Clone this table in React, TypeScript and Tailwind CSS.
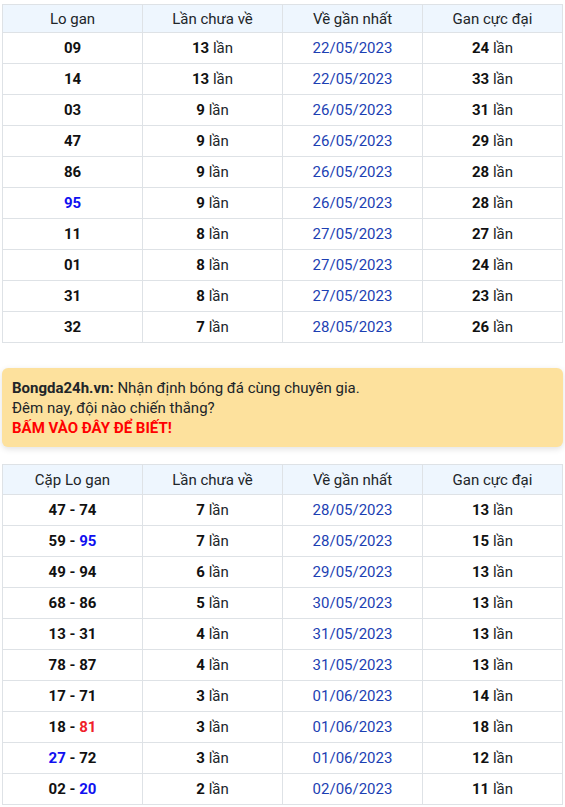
import React from "react";

type Num = { v: string; c?: "blue" | "red" };

const LO_GAN: { n: Num[]; miss: string; last: string; max: string }[] = [
  { n: [{ v: "09" }], miss: "13", last: "22/05/2023", max: "24" },
  { n: [{ v: "14" }], miss: "13", last: "22/05/2023", max: "33" },
  { n: [{ v: "03" }], miss: "9", last: "26/05/2023", max: "31" },
  { n: [{ v: "47" }], miss: "9", last: "26/05/2023", max: "29" },
  { n: [{ v: "86" }], miss: "9", last: "26/05/2023", max: "28" },
  { n: [{ v: "95", c: "blue" }], miss: "9", last: "26/05/2023", max: "28" },
  { n: [{ v: "11" }], miss: "8", last: "27/05/2023", max: "27" },
  { n: [{ v: "01" }], miss: "8", last: "27/05/2023", max: "24" },
  { n: [{ v: "31" }], miss: "8", last: "27/05/2023", max: "23" },
  { n: [{ v: "32" }], miss: "7", last: "28/05/2023", max: "26" },
];

const CAP_LO: typeof LO_GAN = [
  { n: [{ v: "47" }, { v: "74" }], miss: "7", last: "28/05/2023", max: "13" },
  { n: [{ v: "59" }, { v: "95", c: "blue" }], miss: "7", last: "28/05/2023", max: "15" },
  { n: [{ v: "49" }, { v: "94" }], miss: "6", last: "29/05/2023", max: "13" },
  { n: [{ v: "68" }, { v: "86" }], miss: "5", last: "30/05/2023", max: "13" },
  { n: [{ v: "13" }, { v: "31" }], miss: "4", last: "31/05/2023", max: "13" },
  { n: [{ v: "78" }, { v: "87" }], miss: "4", last: "31/05/2023", max: "13" },
  { n: [{ v: "17" }, { v: "71" }], miss: "3", last: "01/06/2023", max: "14" },
  { n: [{ v: "18" }, { v: "81", c: "red" }], miss: "3", last: "01/06/2023", max: "18" },
  { n: [{ v: "27", c: "blue" }, { v: "72" }], miss: "3", last: "01/06/2023", max: "12" },
  { n: [{ v: "02" }, { v: "20", c: "blue" }], miss: "2", last: "02/06/2023", max: "11" },
];

const numColor = (c?: "blue" | "red") =>
  c === "blue" ? "text-[#1010f0]" : c === "red" ? "text-[#f0202a]" : "text-[#111]";

function GanTable({ first, rows, headH }: { first: string; rows: typeof LO_GAN; headH: string }) {
  const cell = "border border-[#dee2e6] text-center align-middle p-0";
  return (
    <table className="w-[561px] border-collapse table-fixed mx-[2px]">
      <thead>
        <tr className="bg-[#eef6fe] text-[#212529]">
          {[first, "Lần chưa về", "Về gần nhất", "Gan cực đại"].map((h) => (
            <th key={h} className={`${cell} ${headH} font-normal`}>{h}</th>
          ))}
        </tr>
      </thead>
      <tbody>
        {rows.map((r, i) => (
          <tr key={i}>
            <td className={`${cell} h-[31px] font-bold`}>
              {r.n.map((x, j) => (
                <React.Fragment key={j}>
                  {j > 0 && <span className="text-[#111]"> - </span>}
                  <span className={numColor(x.c)}>{x.v}</span>
                </React.Fragment>
              ))}
            </td>
            <td className={`${cell} h-[31px]`}>
              <b className="text-[#111]">{r.miss}</b> <span className="text-[#212529]">lần</span>
            </td>
            <td className={`${cell} h-[31px] text-[#1c3fb3]`}>{r.last}</td>
            <td className={`${cell} h-[31px]`}>
              <b className="text-[#111]">{r.max}</b> <span className="text-[#212529]">lần</span>
            </td>
          </tr>
        ))}
      </tbody>
    </table>
  );
}

export default function App() {
  return (
    <div className="w-[565px] bg-white pt-[4px] text-[15px] leading-5 font-['Roboto',sans-serif]">
      <GanTable first="Lo gan" rows={LO_GAN} headH="h-[28px]" />

      {/* Promo banner */}
      <div className="mx-[2px] mt-[25px] mb-[17px] rounded-md bg-[#fde19d] px-[10px] pt-[10px] pb-[9px] shadow-[0_2px_6px_rgba(0,0,0,0.12)] text-[#212529]">
        <p>
          <b>Bongda24h.vn:</b> Nhận định bóng đá cùng chuyên gia.
        </p>
        <p>Đêm nay, đội nào chiến thắng?</p>
        <p className="font-bold text-[#f00]">BẤM VÀO ĐÂY ĐỂ BIẾT!</p>
      </div>

      <GanTable first="Cặp Lo gan" rows={CAP_LO} headH="h-[30px]" />
    </div>
  );
}
